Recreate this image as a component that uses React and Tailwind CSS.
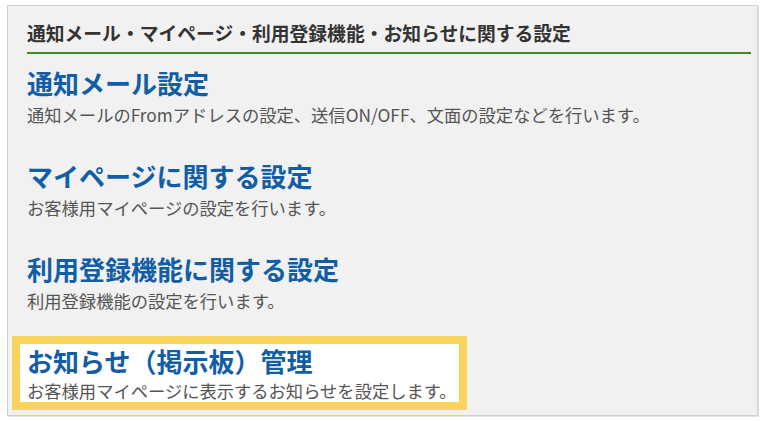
const items = [
  {
    title: '通知メール設定',
    desc: '通知メールのFromアドレスの設定、送信ON/OFF、文面の設定などを行います。',
  },
  {
    title: 'マイページに関する設定',
    desc: 'お客様用マイページの設定を行います。',
  },
  {
    title: '利用登録機能に関する設定',
    desc: '利用登録機能の設定を行います。',
  },
];

const SettingItem = ({ title, desc, tight }) => (
  <div>
    <h3 className="text-[26px] leading-[34px] font-bold text-[#125ea6] whitespace-nowrap">{title}</h3>
    <p
      className={`mt-[2px] text-[17.3px] text-[#555] whitespace-nowrap ${tight ? 'leading-[22px]' : 'leading-[26px]'}`}
    >
      {desc}
    </p>
  </div>
);

const App = () => (
  <div
    className="w-[763px] h-[421px] bg-white pt-[5px] pl-[7px]"
    style={{ fontFamily: '"Noto Sans CJK JP", "Noto Sans", sans-serif' }}
  >
    <div className="w-[751px] h-[411px] bg-[#f0f1f0] border border-[#cfcfcf] shadow-[1px_1px_0_#e2e2e2] pt-[14px] overflow-hidden">
      <div className="ml-[19px] mr-[6px] pb-[6px] border-b-2 border-[#3d8b1e]">
        <h2 className="text-[18.8px] leading-[26px] font-bold text-[#333] whitespace-nowrap">
          通知メール・マイページ・利用登録機能・お知らせに関する設定
        </h2>
      </div>

      <div className="mt-[12px]">
        {items.map((item, i) => (
          <div key={item.title} className={`pl-[19px] ${i === items.length - 1 ? 'mb-[22px]' : 'mb-[31px]'}`}>
            <SettingItem title={item.title} desc={item.desc} />
          </div>
        ))}

        {/* highlighted entry */}
        <div className="ml-[4px] w-[455px] border-[8px] border-[#f9d45c] bg-white">
          <div className="h-[58px] pl-[7px]">
            <SettingItem
              tight
              title="お知らせ（掲示板）管理"
              desc="お客様用マイページに表示するお知らせを設定します。"
            />
          </div>
        </div>
      </div>
    </div>
  </div>
);

export default App;
